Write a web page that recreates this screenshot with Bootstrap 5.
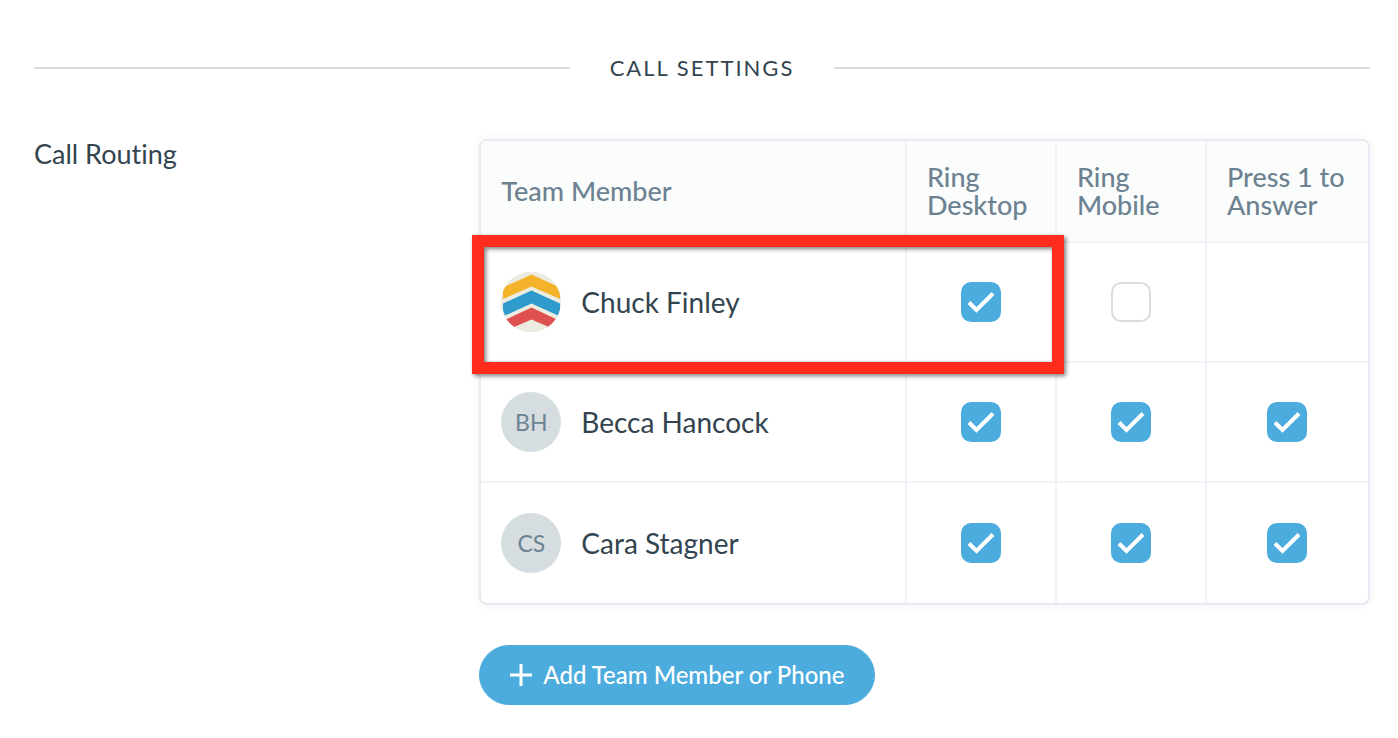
<!DOCTYPE html>
<html lang="en">
<head>
<meta charset="utf-8">
<meta name="viewport" content="width=device-width, initial-scale=1">
<title>Call Settings</title>
<link href="https://cdn.jsdelivr.net/npm/bootstrap@5.3.0/dist/css/bootstrap.min.css" rel="stylesheet">
<style>
  body { font-family: Lato, "Liberation Sans", sans-serif; font-size: 27px; line-height: 28px; font-variant-ligatures: none; color: #33444f; background: #fff; }
  .settings-page { padding: 53px 28px 32px 34px; }
  .section-title { font-size: 22px; letter-spacing: 2px; gap: 40px; margin-bottom: 56px; }
  .section-title h1 { font-size: inherit; line-height: 30px; font-weight: 400; margin: 0; }
  .title-rule { height: 2px; background: #d7dcdf; }
  .setting-label { font-size: 27px; line-height: 30px; }
  .routing-box { border: 2px solid #e8ebf1; border-radius: 8px; box-shadow: 0 0 8px rgba(60, 80, 110, .08); }
  .routing-table { table-layout: fixed; width: 100%; border-collapse: separate; border-spacing: 0; }
  .routing-table th, .routing-table td { border-right: 2px solid #f1f2f7; border-bottom: 2px solid #f1f2f7; padding: 0 20px; vertical-align: middle; }
  .routing-table tr > :last-child { border-right: 0; }
  .routing-table tbody tr:last-child > * { border-bottom: 0; }
  .routing-table thead th { height: 102px; background: #fbfdfd; color: #6c8291; font-weight: 500; }
  .routing-table thead th:first-child { border-top-left-radius: 6px; }
  .routing-table thead th:last-child { border-top-right-radius: 6px; }
  .routing-table tbody tr > * { height: 120px; font-weight: 400; font-size: 28px; }
  .col-ring { width: 150px; }
  .col-press { width: 161px; }
  .avatar { width: 60px; height: 60px; font-size: 23px; color: #6c8291; background: #d6dde0; }
  .member { gap: 20px; }
  .tick.form-check-input { width: 40px; height: 40px; margin: 0; border: 2px solid #d7dcdf; border-radius: 10px; display: block; }
  .tick.form-check-input:checked { border: 0; background-color: #4dacde; background-size: 100% 100%;
    background-image: url("data:image/svg+xml,%3Csvg xmlns='http://www.w3.org/2000/svg' viewBox='0 0 40 40'%3E%3Cpath d='M8 20.5l7.5 7.500L32 11.500' fill='none' stroke='%23fff' stroke-width='4'/%3E%3C/svg%3E"); }
  .callout-frame { left: -9px; right: 304px; top: 94px; height: 139px; border: 12px solid #ff2b1c; pointer-events: none; filter: drop-shadow(2px 2px 2px rgba(0, 0, 0, .5)); }
  .btn-add { --bs-btn-color: #fff; --bs-btn-bg: #4dacde; --bs-btn-border-color: #4dacde; --bs-btn-hover-color: #fff; --bs-btn-hover-bg: #3b9dd0; --bs-btn-hover-border-color: #3b9dd0;
    height: 60px; padding: 0 30px; gap: 11px; font-size: 24px; font-weight: 500; margin-top: 40px; }
</style>
</head>
<body>
<main class="settings-page">
  <div class="section-title d-flex align-items-center">
    <span class="title-rule flex-fill"></span>
    <h1>CALL SETTINGS</h1>
    <span class="title-rule flex-fill"></span>
  </div>
  <div class="row g-0">
    <h2 class="setting-label col-4 m-0 fw-normal">Call Routing</h2>
    <div class="col-8">
      <div class="routing-box position-relative">
        <table class="routing-table">
          <colgroup><col><col class="col-ring"><col class="col-ring"><col class="col-press"></colgroup>
          <thead>
            <tr><th scope="col">Team Member</th><th scope="col">Ring Desktop</th><th scope="col">Ring Mobile</th><th scope="col">Press 1 to Answer</th></tr>
          </thead>
          <tbody>
            <tr>
              <th scope="row"><div class="member d-flex align-items-center">
                <svg class="avatar rounded-circle" viewBox="0 0 60 60" aria-hidden="true">
                  <rect width="60" height="60" fill="#ecece0"/>
                  <path d="M2 15.500L30.500 2.500L59 15.500V27L30.500 14.500L2 27z" fill="#f4b32b"/>
                  <path d="M2 31.500L30.500 18.500L59 31.500V38L57 43.500L30.500 31.500L4 43.500L2 38z" fill="#2e9bcc"/>
                  <path d="M5 47.500L30.500 35.500L56 47.500L49 55.500L30.500 47.500L12 55.500z" fill="#df5150"/>
                </svg>
                <span>Chuck Finley</span></div></th>
              <td><input class="tick form-check-input mx-auto" type="checkbox" aria-label="Ring desktop, Chuck Finley" checked></td>
              <td><input class="tick form-check-input mx-auto" type="checkbox" aria-label="Ring mobile, Chuck Finley"></td>
              <td></td>
            </tr>
            <tr>
              <th scope="row"><div class="member d-flex align-items-center"><span class="avatar rounded-circle d-flex align-items-center justify-content-center">BH</span><span>Becca Hancock</span></div></th>
              <td><input class="tick form-check-input mx-auto" type="checkbox" aria-label="Ring desktop, Becca Hancock" checked></td>
              <td><input class="tick form-check-input mx-auto" type="checkbox" aria-label="Ring mobile, Becca Hancock" checked></td>
              <td><input class="tick form-check-input mx-auto" type="checkbox" aria-label="Press 1 to answer, Becca Hancock" checked></td>
            </tr>
            <tr>
              <th scope="row"><div class="member d-flex align-items-center"><span class="avatar rounded-circle d-flex align-items-center justify-content-center">CS</span><span>Cara Stagner</span></div></th>
              <td><input class="tick form-check-input mx-auto" type="checkbox" aria-label="Ring desktop, Cara Stagner" checked></td>
              <td><input class="tick form-check-input mx-auto" type="checkbox" aria-label="Ring mobile, Cara Stagner" checked></td>
              <td><input class="tick form-check-input mx-auto" type="checkbox" aria-label="Press 1 to answer, Cara Stagner" checked></td>
            </tr>
          </tbody>
        </table>
        <div class="callout-frame position-absolute"></div>
      </div>
      <button type="button" class="btn btn-add rounded-pill d-inline-flex align-items-center">
        <svg width="22" height="22" viewBox="0 0 22 22" aria-hidden="true"><path d="M11 0v22M0 11h22" stroke="#fff" stroke-width="3"/></svg>
        Add Team Member or Phone
      </button>
    </div>
  </div>
</main>
<script src="https://cdn.jsdelivr.net/npm/bootstrap@5.3.0/dist/js/bootstrap.bundle.min.js"></script>
</body>
</html>
